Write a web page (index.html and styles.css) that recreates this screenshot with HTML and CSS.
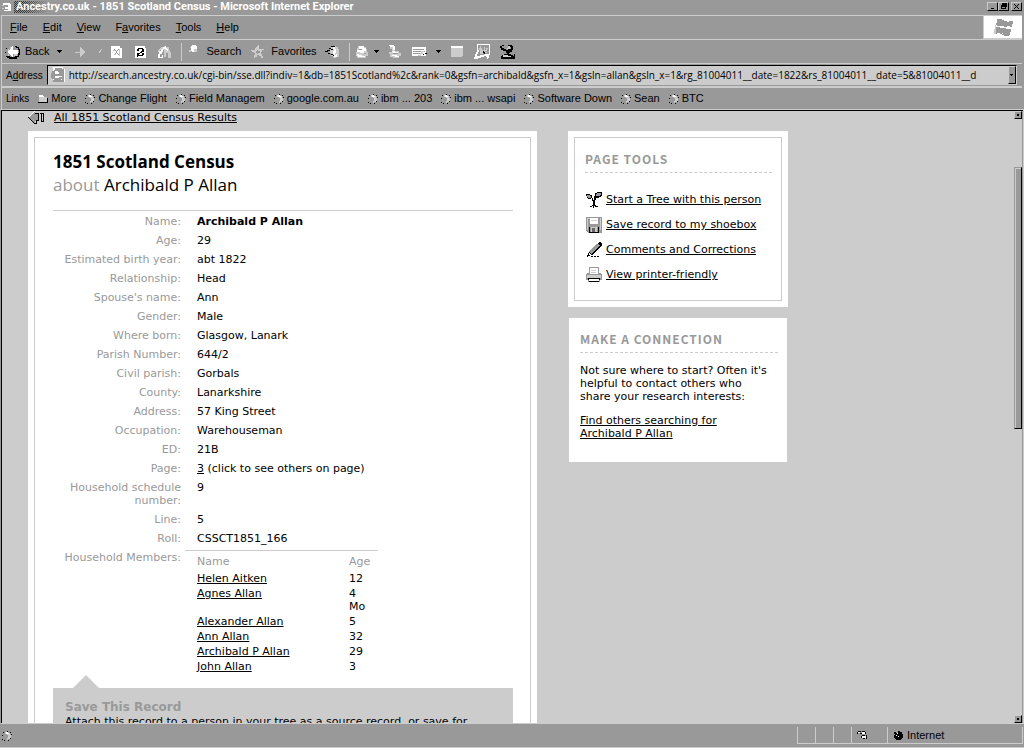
FILE: index.html
```html
<!DOCTYPE html>
<html lang="en">
<head>
<meta charset="utf-8">
<title>Ancestry.co.uk - 1851 Scotland Census</title>
<link rel="stylesheet" href="styles.css">
</head>
<body>
<svg class="defs" aria-hidden="true">
  <symbol id="page" viewBox="0 0 10 10"><path fill="#000" d="M1 1h1v1h-1zM0 4h1v1h-1zM0 8h1v1h-1zM2 9h1v1h-1zM8 1h1v1h-1zM9 3h1v1h-1zM6 9h1v1h-1zM8 7h1v1h-1zM5 0h1v1h-1z"/><path fill="#ccc" d="M3 1h3v1h2v2h1v3h-1v1h-2v1h-1v-2h1v-3h-1v-1h-2z"/><path fill="#fff" d="M4 1h2v1h1v1h-3z"/></symbol>
  <symbol id="arrowdown" viewBox="0 0 5 3"><path d="M0 0h5v1h-1v1h-1v1h-1v-1h-1v-1h-1z"/></symbol>
</svg>
<div class="window">
  <header class="titlebar">
    <svg class="i10" viewBox="0 0 10 10"><path fill="#fff" d="M1 1h7v1h1v7h-7v-1h4v-1h-3v-2h3v-2h-5z"/><path fill="#ccc" d="M0 3h2v1h-2zM0 6h2v1h-2z"/></svg>
    <span class="dither"></span>
    <span class="title">Ancestry.co.uk - 1851 Scotland Census - Microsoft Internet Explorer</span>
    <span class="winbtns">
      <button class="winbtn" aria-label="Minimise"><svg viewBox="0 0 7 7"><path d="M2 5h3v1h-3z"/></svg></button><button class="winbtn" aria-label="Restore"><svg viewBox="0 0 7 7"><path fill-rule="evenodd" d="M2 0h5v4h-1v2h-5v-4h1zM2 4h3v1h-3z"/></svg></button><button class="winbtn close" aria-label="Close"><svg viewBox="0 0 7 7"><path d="M1 1h1v1h1v1h1v-1h1v-1h1v1h-1v1h-1v1h1v1h1v1h-1v-1h-1v-1h-1v1h-1v1h-1v-1h1v-1h1v-1h-1v-1h-1z"/></svg></button>
    </span>
  </header>

  <div class="band menubar">
    <nav class="menus">
      <button><u>F</u>ile</button><button><u>E</u>dit</button><button><u>V</u>iew</button><button>F<u>a</u>vorites</button><button><u>T</u>ools</button><button><u>H</u>elp</button>
    </nav>
    <div class="flag"><svg viewBox="0 0 20 18"><path fill="#999" d="M4 1h5v1h2v6h-7v-1h-1v-2h1zM11 3h3v1h2v-1h4v3h-1v3h-2v-1h-3v1h-3zM3 9h4v1h3v5h-1v1h-2v-1h-3v1h-2v-4h1zM10 10h3v1h5v3h-1v3h-1v1h-5v-1h-2v-1h1z"/><path fill="#ccc" d="M1 11h2v5h-2zM2 7h1v4h-1z"/></svg></div>
  </div>

  <div class="band toolbar">
    <button class="tool back"><svg class="i16" viewBox="0 0 16 16"><path d="M1 4h1v1h-1zM0 8h1v1h-1zM1 12h2v1h-2zM10 2h2v1h2v2h1v6h-1v2h-2v2h-8v-1h-2v-2h3v1h5v-1h3v-3h1v-3h-1v-2h-2z"/><path fill="#fff" d="M7 2h1v4h5v4h-5v3h-1v-1h-1v-1h-1v-1h-1v-1h-1v-2h1v-1h1v-1h1v-2h1z"/><path fill="#ccc" d="M5 3h1v2h-1zM3 5h1v2h-1zM3 10h1v2h-1zM9 10h3v2h-3z"/></svg>Back</button>
    <button class="drop" aria-label="Back history"><svg class="i5"><use href="#arrowdown"/></svg></button>
    <button class="tool fwd" aria-label="Forward"><svg class="i16" viewBox="0 0 16 16"><path fill="#ccc" d="M6 3h1v1h1v1h1v1h1v1h1v2h-1v1h-1v1h-1v1h-1v1h-1v-4h-5v-1h5z"/></svg></button>
    <button class="tool tick" aria-label="Forward history"><svg viewBox="0 0 5 5"><path fill="#ccc" d="M3 0h1v1h-1v2h-1v1h-1v-2h1v-1h1z"/></svg></button>
    <button class="tool stop" aria-label="Stop"><svg class="i16" viewBox="0 0 16 16"><path fill="#fff" d="M2 2h9v2h2v10h-11z"/><path fill="#999" d="M5 5h1v1h1v1h1v-1h1v-1h1v1h-1v1h-1v2h1v1h1v1h-1v-1h-1v-1h-1v1h-1v1h-1v-1h1v-1h1v-2h-1v-1h-1z"/><path fill="#ccc" d="M4 6h2v1h-2zM5 10h2v1h-2zM10 5h1v7h-1z"/></svg></button>
    <button class="tool refresh" aria-label="Refresh"><svg class="i16" viewBox="0 0 16 16"><path fill="#fff" d="M2 2h10v2h1v10h-11z"/><path d="M5 4h5v1h1v3h-2v1h-2v-1h1v-1h1v-2h-4zM4 5h2v2h-2zM4 9h3v1h-1v1h4v1h-5v1h-1zM9 9h2v2h-1v1h-1z"/></svg></button>
    <button class="tool home" aria-label="Home"><svg class="i16" viewBox="0 0 16 16"><path fill="#ccc" d="M7 2h2v1h3v3h1v2h1v6h-3v-5h-2v4h-2v-7h-4v2h-2v-2h1v-1h1v-1h1v-1h2z"/><path fill="#fff" d="M8 2h1v2h1v1h1v2h-1v-1h-1v-1h-3v3h-1v2h-2v3h2v-2h1v3h-5v-4h1v-3h2v-2h2v-2h2z"/></svg></button>
    <span class="sep"></span>
    <button class="tool search"><svg class="i16" viewBox="0 0 16 16"><path fill="#fff" d="M6 1h4v1h1v5h-1v1h-4v-1h-1v-5h1z"/><path fill="#ccc" d="M8 5h3v3h-3zM3 6h2v2h-2zM4 3h1v1h-1z"/></svg>Search</button>
    <button class="tool favs"><svg class="i16" viewBox="0 0 16 16"><path fill="#ccc" fill-rule="evenodd" d="M7 1h1v4h5v1h-2v2h-1v2h1v2h1v2h-2v-2h-2v-1h-2v2h-2v1h-1v-3h1v-2h-1v-1h-2v-1h-1v-1h4v-2h1zM6 6v1h-1v2h1v1h1v-1h2v-2h-2v-1z"/></svg>Favorites</button>
    <button class="tool hist" aria-label="History"><svg class="i16" viewBox="0 0 16 16"><path fill="#ccc" d="M6 2h5v1h2v2h1v8h-3v1h-3v-2h-2v-3h-1v-4h1z"/><path fill="#000" d="M6 2h4v1h-4zM4 4h2v1h-2zM2 6h3v1h-3zM0 7h3v1h-3zM3 9h2v1h-2zM6 5h2v1h-2zM9 6h1v3h-1zM6 10h2v1h-2zM8 11h2v1h-2z"/><path fill="#fff" d="M8 3h2v2h1v4h-1v2h1v-1h1v3h-3v-3h-1v-3h1z"/></svg></button>
    <span class="sep"></span>
    <button class="tool mail" aria-label="Mail"><svg class="i16" viewBox="0 0 16 16"><path fill="#ccc" d="M4 2h6v1h2v2h1v3h1v4h-2v2h-9v-2h-1v-4h1v-4h1z"/><path fill="#fff" d="M5 2h5v2h2v3h-2v2h-4v-1h-3v-2h2zM3 10h2v1h3v1h3v1h-7z"/><path fill="#999" d="M5 5h3v1h-3zM10 9h2v1h-2z"/></svg></button>
    <button class="drop" aria-label="Mail options"><svg class="i5"><use href="#arrowdown"/></svg></button>
    <button class="tool print" aria-label="Print"><svg class="i16" viewBox="0 0 16 16"><path fill="#ccc" d="M3 3h5v4h4v2h2v3h-2v2h-6v-1h-3v-3h-1v-2h3v-3h-2z"/><path fill="#fff" d="M2 1h5v1h1v4h-2v-3h-3zM5 7h3v1h3v1h-5zM5 11h5v1h2v1h-4v-1h-3z"/><path fill="#999" d="M6 9h5v1h-5z"/></svg></button>
    <button class="tool edit" aria-label="Edit"><svg class="i16" viewBox="0 0 16 16"><path fill="#fff" d="M0 3h14v9h-14z"/><path fill="#999" d="M1 5h11v1h-11zM1 7h12v1h-12zM1 9h7v1h-7z"/><path fill="#ccc" d="M9 7h3v1h-1v2h-2v2h-3v-1h2v-2h1z"/><path d="M13 9h2v1h-2zM11 10h1v1h-1z"/></svg></button>
    <button class="drop" aria-label="Edit options"><svg class="i5"><use href="#arrowdown"/></svg></button>
    <button class="tool note" aria-label="Discuss"><svg class="i16" viewBox="0 0 16 16"><path fill="#ccc" d="M2 2h12v10h-1v1h-11z"/><path fill="#fff" d="M2 2h12v2h-12z"/></svg></button>
    <button class="tool pic" aria-label="Research"><svg class="i16" viewBox="0 0 16 16"><path fill="#fff" fill-rule="evenodd" d="M3 0h13v11h-1v3h-1v1h-1v-2h-1v-1h-2v1h-3v1h-3v1h-4v-2h1v-3h1v-2h1zM4 1v5h1v2h-1v2h-1v2h3v-1h4v-1h5v-9z"/><path fill="#ccc" d="M6 2h1v2h1v2h2v-3h1v3h1v-2h2v1h-1v2h-2v1h2v1h-4v1h-3v-4h-1z"/><path d="M9 7h1v1h1v2h-1v-1h-1z"/></svg></button>
    <button class="tool msg" aria-label="Messenger"><svg class="i16" viewBox="0 0 16 16"><path d="M1 2h2v-1h2v1h-2v2h2v1h2v1h2v-1h3v-2h-2v-1h-1v-1h4v1h1v4h-1v2h-2v1h-1v1h2v1h2v1h1v-2h1v5h-14v-3h1v-1h2v-1h3v-1h-1v-2h-3v-1h-2z"/><path fill="#ccc" d="M9 2h2v3h-3v-1h1zM4 11h5v1h3v1h-8z"/></svg></button>
  </div>

  <div class="band address">
    <label for="url">A<u>d</u>dress</label>
    <div class="field">
      <svg class="i16" viewBox="0 0 16 16"><path fill="#fff" d="M3 0h10v2h2v13h-12z"/><path fill="#999" d="M5 1h7v1h2v13h-11v-2h9v-9h-3v-1h-4z"/><path fill="#999" fill-rule="evenodd" d="M4 3h6v1h2v5h-7v2h4v-1h3v2h-1v1h-7v-1h-2v-1h-1v-5h1v-2h2zM5 5v2h4v-2z"/><path fill="#fff" d="M5 4h3v1h-3zM5 9h4v1h-4z"/></svg>
      <input id="url" type="text" value="http://search.ancestry.co.uk/cgi-bin/sse.dll?indiv=1&amp;db=1851Scotland%2c&amp;rank=0&amp;gsfn=archibald&amp;gsfn_x=1&amp;gsln=allan&amp;gsln_x=1&amp;rg_81004011__date=1822&amp;rs_81004011__date=5&amp;81004011__d">
      <button class="urldrop" aria-label="Show addresses"><svg viewBox="0 0 3 2"><path d="M0 0h3v1h-1v1h-1v-1h-1z"/></svg></button>
    </div>
  </div>

  <nav class="band links">
    <span class="linkslabel">Links</span>
    <a href="#"><svg class="i10" viewBox="0 0 10 10"><path fill="#fff" d="M1 1h4v1h1v1h3v1h-8z"/><path fill="#ccc" d="M1 3h8v5h-8z"/><path d="M0 8h9v-4h1v5h-10z"/></svg>More</a>
    <a href="#"><svg class="i10"><use href="#page"/></svg>Change Flight</a>
    <a href="#"><svg class="i10"><use href="#page"/></svg>Field Managem</a>
    <a href="#"><svg class="i10"><use href="#page"/></svg>google.com.au</a>
    <a href="#"><svg class="i10"><use href="#page"/></svg>ibm ... 203</a>
    <a href="#"><svg class="i10"><use href="#page"/></svg>ibm ... wsapi</a>
    <a href="#"><svg class="i10"><use href="#page"/></svg>Software Down</a>
    <a href="#"><svg class="i10"><use href="#page"/></svg>Sean</a>
    <a href="#"><svg class="i10"><use href="#page"/></svg>BTC</a>
  </nav>

  <div class="view">
    <main class="page">
      <a class="backlink" href="#"><svg viewBox="0 0 16 13"><path fill="#999" d="M6 1h1v2h4v7h-4v2h-1v-1h-1v-1h-1v-1h-1v-1h-1v-1h-1v-1h1v-1h1v-1h1v-1h1v-1h1z"/><path d="M0 6h1v1h1v1h1v1h1v1h1v1h1v1h2v-3h2v1h-1v3h-3v-1h-1v-1h-1v-1h-1v-1h-1v-1h-1v-1h-1zM7 2h4v8h-1v-7h-3zM12 2h4v9h-3v-1h2v-7h-1v7h-1v-7h-1z"/><path fill="#fff" d="M6 0h1v1h-1v1h-1v1h-1v1h-1v1h-1v1h-1v-1h1v-1h1v-1h1v-1h1v-1h1z"/></svg><span>All 1851 Scotland Census Results</span></a>
      <div class="columns">
        <article class="card record">
          <div class="frame">
            <h1>1851 Scotland Census</h1>
            <h2><span>about</span> Archibald P Allan</h2>
            <table class="facts">
              <tr><th scope="row">Name:</th><td><b>Archibald P Allan</b></td></tr>
              <tr><th scope="row">Age:</th><td>29</td></tr>
              <tr><th scope="row">Estimated birth year:</th><td>abt 1822</td></tr>
              <tr><th scope="row">Relationship:</th><td>Head</td></tr>
              <tr><th scope="row">Spouse's name:</th><td>Ann</td></tr>
              <tr><th scope="row">Gender:</th><td>Male</td></tr>
              <tr><th scope="row">Where born:</th><td>Glasgow, Lanark</td></tr>
              <tr><th scope="row">Parish Number:</th><td>644/2</td></tr>
              <tr><th scope="row">Civil parish:</th><td>Gorbals</td></tr>
              <tr><th scope="row">County:</th><td>Lanarkshire</td></tr>
              <tr><th scope="row">Address:</th><td>57 King Street</td></tr>
              <tr><th scope="row">Occupation:</th><td>Warehouseman</td></tr>
              <tr><th scope="row">ED:</th><td>21B</td></tr>
              <tr><th scope="row">Page:</th><td><a href="#">3</a> (click to see others on page)</td></tr>
              <tr><th scope="row">Household schedule number:</th><td>9</td></tr>
              <tr><th scope="row">Line:</th><td>5</td></tr>
              <tr><th scope="row">Roll:</th><td>CSSCT1851_166</td></tr>
              <tr><th scope="row">Household Members:</th><td class="nest">
                <table class="members">
                  <thead><tr><th scope="col">Name</th><th scope="col">Age</th></tr></thead>
                  <tbody>
                    <tr><td><a href="#">Helen Aitken</a></td><td>12</td></tr>
                    <tr><td><a href="#">Agnes Allan</a></td><td>4<br>Mo</td></tr>
                    <tr><td><a href="#">Alexander Allan</a></td><td>5</td></tr>
                    <tr><td><a href="#">Ann Allan</a></td><td>32</td></tr>
                    <tr><td><a href="#">Archibald P Allan</a></td><td>29</td></tr>
                    <tr><td><a href="#">John Allan</a></td><td>3</td></tr>
                  </tbody>
                </table>
              </td></tr>
            </table>
            <div class="notch"></div>
            <section class="save">
              <h3>Save This Record</h3>
              <p>Attach this record to a person in your tree as a source record, or save for</p>
            </section>
          </div>
        </article>
        <aside class="side">
          <section class="card tools">
            <div class="frame">
              <h3>PAGE TOOLS</h3>
              <ul>
                <li><svg class="i16" viewBox="0 0 16 16"><path d="M0 2h4v1h2v3h1v2h1v-4h1v-3h2v-1h5v4h-1v1h-2v1h-3v2h-1v5h1v1h2v1h-3v-1h-1v2h-1v-2h-1v1h-2v-1h2v-1h1v-4h-1v-3h-1v1h-3v-1h-1v-2h-1z"/><path fill="#999" d="M1 3h3v1h1v2h-3v-1h-1zM11 1h4v2h-1v1h-4v-2h1z"/></svg><a href="#">Start a Tree with this person</a></li>
                <li><svg class="i16" viewBox="0 0 16 16"><path fill="#999" d="M0 0h16v16h-14v-1h-1v-1h-1z"/><path fill="#ccc" d="M1 1h3v1h-2v11h-1zM14 1h1v12h-1z"/><path fill="#fff" d="M4 1h8v6h-8z"/><path fill="#ccc" d="M5 3h6v1h-6z"/><path d="M3 15h10v1h-10zM3 10h1v5h-1zM12 10h1v5h-1z"/><path fill="#ccc" d="M5 10h6v5h-6z"/><path fill="#666" d="M6 11h3v4h-3z"/></svg><a href="#">Save record to my shoebox</a></li>
                <li><svg class="i16" viewBox="0 0 16 16"><path d="M12 0h3v1h1v3h-1v1h-1v1h-1v1h-1v1h-1v1h-1v1h-1v1h-1v1h-1v1h-3v1h-2v1h-1v-2h1v-2h1v-1h1v-1h1v-1h1v-1h1v-1h1v-1h1v-1h1v-1h1v-1h1v-1h1z"/><path fill="#999" d="M11 2h2v1h1v1h-1v1h-1v1h-1v1h-1v1h-1v1h-1v1h-1v1h-1v1h-1v-1h-1v-1h-1v-1h1v-1h1v-1h1v-1h1v-1h1v-1h1v-1h1v-1h1z"/><path fill="#fff" d="M3 11h1v1h1v1h-2z"/><path d="M5 14h2v1h-2zM8 14h2v1h-2zM11 14h2v1h-2z"/></svg><a href="#">Comments and Corrections</a></li>
                <li><svg class="i16" viewBox="0 0 16 16"><path fill="#999" d="M3 0h10v6h2v1h1v6h-2v2h-12v-2h-2v-6h1v-1h2z"/><path fill="#fff" d="M4 1h8v6h-8zM3 12h10v2h-10z"/><path fill="#ccc" d="M5 3h5v1h-5zM5 5h5v1h-5zM1 8h14v3h-14z"/><path d="M2 11h12v2h-1v-1h-10v1h-1zM3 14h10v1h-10z"/></svg><a href="#">View printer-friendly</a></li>
              </ul>
            </div>
          </section>
          <section class="card connect">
            <h3>MAKE A CONNECTION</h3>
            <p>Not sure where to start? Often it's helpful to contact others who share your research interests:</p>
            <p><a href="#">Find others searching for Archibald P Allan</a></p>
          </section>
        </aside>
      </div>
    </main>
    <div class="scroll"><span class="sbtn"></span><span class="thumb"></span><span class="sbtn last"></span></div>
  </div>

  <footer class="status">
    <svg class="i10"><use href="#page"/></svg>
    <span class="cell msgcell"></span><span class="cell"></span><span class="cell"></span><span class="cell"></span>
    <span class="cell priv"><svg class="i10" viewBox="0 0 10 10"><path d="M1 1h3v1h-3zM0 2h1v2h-1zM5 1h3v1h-3zM8 2h1v2h-1zM3 3h2v1h-2zM5 5h3v1h-3zM4 6h1v2h-1zM9 5h1v4h-1zM6 8h2v1h-2z"/><path fill="#fff" d="M5 2h3v2h-3zM5 6h4v2h-4zM1 2h2v1h-2z"/></svg></span>
    <span class="cell zone"><svg class="i10" viewBox="0 0 10 10"><path d="M1 2h2v1h2v-2h2v1h2v2h1v4h-1v1h-1v1h-5v-1h-1v-1h-1v-3h1v-1h-1z"/><path fill="#fff" d="M4 3h1v1h-1zM3 5h1v1h-1zM5 6h1v1h-1z"/></svg>Internet</span>
  </footer>
</div>
</body>
</html>
```
FILE: styles.css
```css
* { box-sizing: border-box; }
body { margin: 0; background: #999; color: #000; font: 11px/13px "DejaVu Sans", Verdana, sans-serif; }
a { color: inherit; }
button { margin: 0; padding: 0; border: 0; background: none; color: inherit; font: inherit; }
h1, h2, h3, p, ul { margin: 0; padding: 0; }
svg { display: block; flex: none; shape-rendering: crispEdges; }
.defs { position: absolute; width: 0; height: 0; }
.i5 { width: 5px; height: 3px; }
.i10 { width: 10px; height: 10px; }
.i16 { width: 16px; height: 16px; }

.window { display: flex; flex-direction: column; height: 100vh; overflow: hidden; }
.titlebar, .band, .status { font-family: "Liberation Sans", Arial, sans-serif; flex: none; display: flex; align-items: center; }

.titlebar { position: relative; height: 15px; padding: 0 2px 2px; color: #fff; font-family: Roboto, sans-serif; font-weight: bold; }
.title { position: relative; margin-left: 4px; white-space: nowrap; }
.dither { position: absolute; left: 14px; top: 1px; width: 34px; height: 12px; background: repeating-conic-gradient(#333 0 25%, #999 0 50%) 0 0 / 2px 2px; -webkit-mask-image: linear-gradient(90deg, #000 30%, transparent); mask-image: linear-gradient(90deg, #000 30%, transparent); }
.winbtns { display: flex; margin-left: auto; }
.winbtn { width: 11px; height: 9px; padding: 0 1px; border: 1px solid; border-color: #ccc #000 #000 #ccc; }
.winbtn svg { width: 7px; height: 7px; }
.winbtn.close { margin-left: 2px; }

.band { margin: 0 2px 0 1px; border-top: 1px solid #ccc; border-left: 1px solid #ccc; }
.menubar { height: 24px; }
.menus { display: flex; gap: 15px; padding-left: 8px; flex: 1; }
.flag { width: 39px; height: 23px; padding: 2px 9px; background: #fff; border-left: 1px solid #ccc; border-bottom: 1px solid #ccc; }
.flag svg { width: 20px; height: 18px; }

.toolbar { height: 24px; padding-left: 3px; }
.tool { display: flex; align-items: center; gap: 4px; }
.drop { display: flex; align-items: center; height: 16px; padding: 0 8px; }
.fwd { margin-left: 4px; }
.tick { margin-left: 8px; }
.tick svg { width: 5px; height: 5px; }
.stop { margin-left: 6px; }
.refresh, .home { margin-left: 8px; }
.sep { width: 1px; height: 18px; margin: 0 4px 0 8px; background: #ccc; }
.favs { margin-left: 10px; }
.hist { margin-left: 8px; }
.mail + .drop { padding: 0 8px 0 4px; }
.edit { margin-left: 9px; }
.pic, .msg { margin-left: 9px; }

.address { height: 24px; padding: 0 5px 0 4px; gap: 4px; font-size: 10px; border-bottom: 1px solid #ccc; }
.field { display: flex; align-items: center; flex: 1; min-width: 0; height: 20px; padding-left: 2px; background: #ccc; border: 1px solid #ccc; border-top-color: #000; border-left-color: #000; }
.field input { flex: 1; min-width: 0; margin-left: 3px; padding: 0; border: 0; outline: 0; background: none; color: #000; font: 10px/16px "Open Sans", Arial, sans-serif; }
.urldrop { width: 8px; height: 18px; background: #999; border: 1px solid; border-color: #ccc #000 #000 #ccc; padding: 0 1px; }
.urldrop svg { width: 3px; height: 2px; }

.links { height: 22px; padding: 0 4px; gap: 9px; white-space: nowrap; }
.linkslabel { font-size: 10px; }
.links a { display: flex; align-items: center; gap: 3px; text-decoration: none; }

.view { display: flex; flex: 1; min-height: 0; border: 1px solid #ccc; border-left-color: #999; box-shadow: inset 1px 1px #000; background: #ccc; padding: 1px 0 0 1px; }
.page { flex: 1; min-width: 0; overflow: hidden; padding-left: 26px; }
.backlink { display: flex; gap: 10px; height: 20px; }
.backlink svg { width: 16px; height: 13px; }
.columns { display: flex; align-items: flex-start; gap: 31px; }
.card { background: #fff; }
.record { width: 509px; padding: 6px; }
.frame { border: 1px solid #ccc; }
.record .frame { padding: 12px 17px 18px 18px; }
h1, h2 { font: 17px/23px "Open Sans", "Trebuchet MS", sans-serif; }
h1 { font-weight: bold; }
h2 span { color: #999; }
.facts { width: 100%; margin-top: 14px; padding-top: 1px; border-top: 1px solid #ccc; border-collapse: separate; border-spacing: 0; }
.facts th, .facts td { padding: 3px 0; font-weight: normal; text-align: right; vertical-align: top; color: #999; }
.facts > tbody > tr > th { width: 128px; }
.facts td { padding-left: 16px; text-align: left; color: #000; }
.facts .nest { padding: 2px 0 0 4px; }
.members { width: 193px; border-top: 1px solid #ccc; border-spacing: 0; }
.facts .members th { padding: 4px 0 3px 12px; text-align: left; }
.facts .members td { padding: 1px 0 1px 12px; }
.members th:last-child { width: 41px; }
.notch { width: 26px; height: 13px; margin: 1px 0 0 20px; background: #ccc; clip-path: polygon(50% 0, 100% 100%, 0 100%); }
.save { padding: 12px; background: #ccc; }
.save h3 { font: bold 12px/15px "DejaVu Sans", Verdana, sans-serif; color: #999; }

.side { width: 220px; }
.side h3 { padding-bottom: 6px; border-bottom: 1px dashed #ccc; color: #999; font: bold 12px/14px "Noto Sans CJK SC", "Trebuchet MS", sans-serif; letter-spacing: 1px; }
.tools { padding: 6px; }
.tools .frame { padding: 14px 9px 13px 10px; }
.tools ul { margin-top: 14px; padding-left: 1px; list-style: none; white-space: nowrap; }
.tools li { display: flex; align-items: center; gap: 4px; height: 25px; }
.connect { margin: 11px 1px 0; padding: 14px 9px 22px 11px; }
.connect p { margin-top: 11px; padding-right: 8px; }

.scroll { display: flex; flex-direction: column; width: 9px; border-right: 1px solid #999; }
.sbtn { width: 8px; height: 8px; background: radial-gradient(circle at 50% 50%, #000 0 1px, #999 1px); border: 1px solid; border-color: #ccc #000 #000 #ccc; }
.last { margin-top: auto; }
.thumb { width: 8px; height: 262px; margin-top: 48px; background: #999; border: 1px solid; border-color: #999 #000 #000 #999; box-shadow: inset 1px 1px #ccc; }

.status { height: 24px; padding: 3px 1px 3px 2px; border-bottom: 1px solid #ccc; }
.cell { display: flex; align-items: center; gap: 4px; width: 18px; height: 17px; border-right: 1px solid #ccc; border-bottom: 1px solid #ccc; }
.msgcell { flex: 1; border-bottom: 0; }
.priv { width: 36px; padding-left: 5px; }
.zone { width: 135px; padding-left: 5px; }
```
